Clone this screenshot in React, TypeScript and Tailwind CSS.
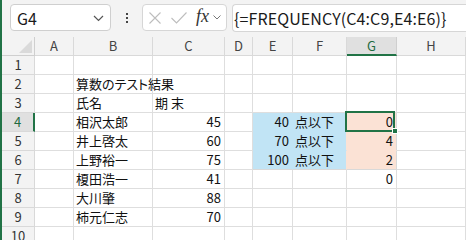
import React from 'react';

const cols = ['A', 'B', 'C', 'D', 'E', 'F', 'G', 'H'];

type Cell = { v: string; right?: boolean; fill?: 'blue' | 'peach' };

// one entry per row: column letter -> cell
const rows: Record<string, Cell>[] = [
  {},
  { B: { v: '算数のテスト結果' } },
  { B: { v: '氏名' }, C: { v: '期 末' } },
  { B: { v: '相沢太郎' }, C: { v: '45', right: true }, E: { v: '40', right: true, fill: 'blue' }, F: { v: '点以下', fill: 'blue' }, G: { v: '0', right: true, fill: 'peach' } },
  { B: { v: '井上啓太' }, C: { v: '60', right: true }, E: { v: '70', right: true, fill: 'blue' }, F: { v: '点以下', fill: 'blue' }, G: { v: '4', right: true, fill: 'peach' } },
  { B: { v: '上野裕一' }, C: { v: '75', right: true }, E: { v: '100', right: true, fill: 'blue' }, F: { v: '点以下', fill: 'blue' }, G: { v: '2', right: true, fill: 'peach' } },
  { B: { v: '榎田浩一' }, C: { v: '41', right: true }, G: { v: '0', right: true } },
  { B: { v: '大川肇' }, C: { v: '88', right: true } },
  { B: { v: '柿元仁志' }, C: { v: '70', right: true } },
  {},
];

function cellClass(row: number, col: string, cell?: Cell) {
  const fill = cell?.fill;
  let cls = 'relative flex items-center border-r border-b h-[19px] text-[13px] text-[#111] whitespace-nowrap ';
  if (fill === 'blue') {
    cls += 'bg-[#c1e4f5] ';
    cls += row === 6 ? 'border-b-[#d9d9d9] ' : 'border-b-[#c1e4f5] ';
    cls += col === 'F' ? 'border-r-[#fbe2d5] ' : 'border-r-[#c1e4f5] ';
  } else if (fill === 'peach') {
    cls += 'bg-[#fbe2d5] border-r-[#d9d9d9] ';
    cls += row === 6 ? 'border-b-[#d9d9d9] ' : 'border-b-[#fbe2d5] ';
  } else {
    cls += 'border-[#dedede] ';
  }
  if (cell?.right) cls += 'justify-end pr-[3px] ';
  else cls += 'pl-[2px] ';
  if (col === 'B') cls += 'overflow-visible z-10 ';
  return cls;
}

function NameBox() {
  return (
    <div className="w-[101px] h-[27px] bg-white border border-[#cfcfcf] rounded-[4px] flex items-center pl-[6px] pr-[6px]">
      <span className="text-[16px] text-[#1a1a1a] flex-1">G4</span>
      <svg width="11" height="7" viewBox="0 0 11 7" className="mt-[1px]">
        <path d="M1 1 L5.5 5.5 L10 1" fill="none" stroke="#555" strokeWidth="1.2" />
      </svg>
    </div>
  );
}

function FxBox() {
  return (
    <div className="w-[85px] h-[27px] bg-white border border-[#d6d6d6] rounded-[4px] flex items-center pl-[6px]">
      <svg width="12" height="12" viewBox="0 0 12 12">
        <path d="M0.5 0.5 L11.5 11.5 M11.5 0.5 L0.5 11.5" stroke="#bdbdbd" strokeWidth="1.1" />
      </svg>
      <svg width="16" height="12" viewBox="0 0 16 12" className="ml-[10px]">
        <path d="M0.5 6 L5.5 11 L15.5 0.5" fill="none" stroke="#bdbdbd" strokeWidth="1.1" />
      </svg>
      <span className="ml-[9px] font-['Liberation_Serif',serif] italic text-[18px] leading-none text-[#333] -mt-[3px]">fx</span>
      <svg width="8" height="5" viewBox="0 0 8 5" className="ml-[4px]">
        <path d="M0.5 0.5 L4 4 L7.5 0.5" fill="none" stroke="#777" strokeWidth="1" />
      </svg>
    </div>
  );
}

export default function App() {
  return (
    <div className="w-[466px] h-[240px] overflow-hidden bg-white border-l-2 border-[#217346] font-['Noto_Sans_CJK_JP',sans-serif] [font-feature-settings:'palt']">
      {/* formula bar */}
      <div className="h-[37px] bg-[#f3f3f3] flex items-start pt-[4px] pl-[8px]">
        <NameBox />
        <div className="w-[31px] h-[27px] flex flex-col items-center justify-center gap-[2px]">
          <span className="w-[2px] h-[2px] bg-[#444]" />
          <span className="w-[2px] h-[2px] bg-[#444]" />
          <span className="w-[2px] h-[2px] bg-[#444]" />
        </div>
        <FxBox />
        <div className="ml-[5px] flex-1 h-[28px] bg-white border border-r-0 border-[#d6d6d6] rounded-l-[4px] flex items-center pl-[1px]">
          <span className="text-[16px] text-[#1a1a1a] tracking-[0.1px]">{'{=FREQUENCY(C4:C9,E4:E6)}'}</span>
        </div>
      </div>

      {/* sheet */}
      <div className="grid grid-cols-[33px_39px_79px_72px_28px_40px_54px_50px_1fr] bg-white">
        {/* header row */}
        <div className="h-[19px] bg-[#f3f3f3] border-r border-b border-[#cfcfcf] relative">
          <svg width="13" height="13" viewBox="0 0 13 13" className="absolute right-[2px] bottom-[2px]">
            <path d="M13 0 L13 13 L0 13 Z" fill="#dadada" />
          </svg>
        </div>
        {cols.map((c) => (
          <div
            key={c}
            className={
              c === 'G'
                ? 'h-[19px] bg-[#e0e0e0] border-r border-[#cfcfcf] border-b-2 border-b-[#217346] flex items-center justify-center text-[13px] text-[#1f6b40] font-[\'Noto_Sans\',sans-serif]'
                : 'h-[19px] bg-[#f3f3f3] border-r border-b border-[#d9d9d9] flex items-center justify-center text-[13px] text-[#444] font-[\'Noto_Sans\',sans-serif]'
            }
          >
            {c}
          </div>
        ))}

        {rows.map((r, i) => {
          const rowNum = i + 1;
          return (
            <React.Fragment key={rowNum}>
              <div
                className={
                  rowNum === 4
                    ? 'h-[19px] bg-[#e0e0e0] border-b border-[#d9d9d9] border-r-2 border-r-[#217346] flex items-center justify-center text-[13px] text-[#1f6b40] font-[\'Noto_Sans\',sans-serif]'
                    : 'h-[19px] bg-[#f3f3f3] border-r border-b border-[#d9d9d9] flex items-center justify-center text-[13px] text-[#333] font-[\'Noto_Sans\',sans-serif]'
                }
              >
                {rowNum}
              </div>
              {cols.map((c) => {
                const cell = r[c];
                return (
                  <div key={c} className={cellClass(rowNum, c, cell)}>
                    {cell && <span className="leading-[18px]">{cell.v}</span>}
                    {rowNum === 4 && c === 'G' && (
                      <>
                        <div className="absolute -left-[2px] -top-[2px] w-[50px] h-[21px] border-2 border-[#217346] pointer-events-none" />
                        <div className="absolute -right-[2px] -bottom-[3px] w-[6px] h-[6px] bg-[#217346] border border-white z-20" />
                      </>
                    )}
                  </div>
                );
              })}
            </React.Fragment>
          );
        })}
      </div>
    </div>
  );
}
